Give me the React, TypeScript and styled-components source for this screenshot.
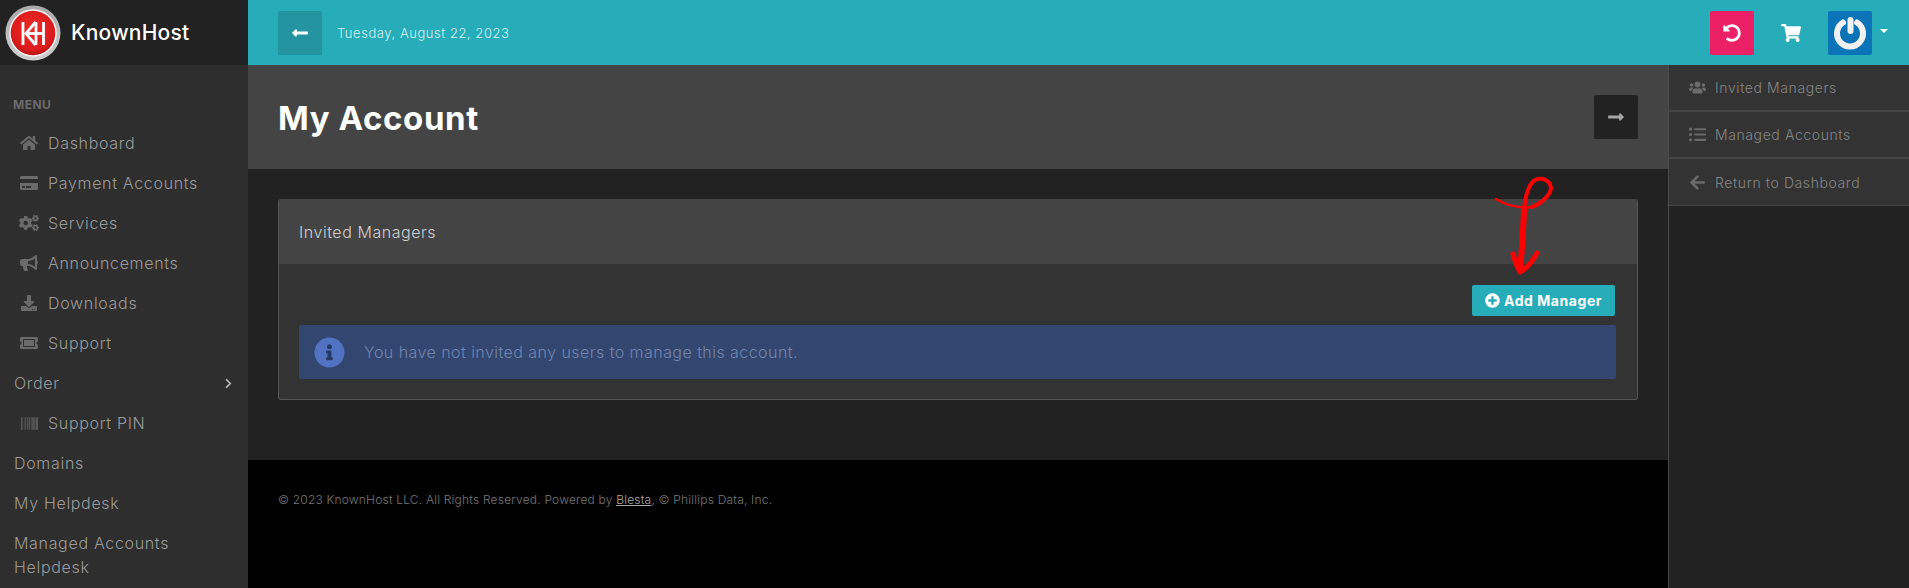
import React from "react";
import styled, { createGlobalStyle } from "styled-components";
import {
  FaHome, FaCreditCard, FaCogs, FaBullhorn, FaDownload, FaTicketAlt, FaChevronRight, FaBarcode,
  FaUsers, FaListUl, FaArrowLeft, FaLongArrowAltLeft, FaLongArrowAltRight, FaUndoAlt, FaShoppingCart,
  FaPlusCircle, FaInfoCircle,
} from "react-icons/fa";

const Global = createGlobalStyle`
  html, body { margin: 0; padding: 0; height: 588px; overflow: hidden; background: #222; }
  * { box-sizing: border-box; }
  body { font-family: Inter, "Open Sans", "Liberation Sans", sans-serif; }
`;

const Page = styled.div`
  display: grid;
  grid-template-columns: 248px 1fr;
  width: 1909px;
  height: 588px;
  overflow: hidden;
  position: relative;
`;
const Side = styled.aside`
  background: #2e2e2e;
  display: flex;
  flex-direction: column;
  min-height: 0;
`;
const Brand = styled.div`
  height: 65px;
  flex: none;
  background: #222;
  display: flex;
  align-items: center;
  padding-left: 5px;
  gap: 8px;
`;
const BrandName = styled.span`
  color: #fff;
  font-size: 21px;
  font-weight: 500;
  letter-spacing: 0.25px;
`;
const MenuTitle = styled.div`
  color: #6a6a6a;
  font-size: 12px;
  font-weight: 700;
  letter-spacing: 0.5px;
  margin: 33px 0 0 13px;
  line-height: 13px;
`;
const Nav = styled.nav`
  display: flex;
  flex-direction: column;
  margin-top: 12px;
`;
const NavRow = styled.div<{ $indent?: boolean }>`
  display: flex;
  align-items: flex-start;
  padding: 8px 14px 8px ${(p) => (p.$indent ? "20px" : "14px")};
  color: #9a9a9a;
  font-size: 16px;
  font-weight: 300;
  line-height: 24px;
  letter-spacing: 0.68px;
`;
const NavIcon = styled.span<{ $size?: number }>`
  width: 18px;
  margin-right: 10px;
  height: 24px;
  flex: none;
  display: flex;
  align-items: center;
  justify-content: center;
  color: #6a6a6a;
  font-size: ${(p) => p.$size ?? 18}px;
  svg { flex: none; }
`;
const NavLabel = styled.span`
  flex: 1;
`;
const Chevron = styled.span`
  display: flex;
  align-items: center;
  height: 24px;
  color: #b5b5b5;
  font-size: 11px;
`;
const Main = styled.div`
  display: flex;
  flex-direction: column;
  min-width: 0;
`;
const TopBar = styled.header`
  height: 65px;
  flex: none;
  background: #27acb9;
  display: flex;
  align-items: center;
  padding: 0 21px 0 30px;
`;
const SquareBtn = styled.div<{ $bg: string; $color?: string }>`
  width: 44px;
  height: 44px;
  border-radius: 2px;
  flex: none;
  background: ${(p) => p.$bg};
  color: ${(p) => p.$color ?? "#fff"};
  display: flex;
  align-items: center;
  justify-content: center;
  font-size: 18px;
`;
const DateText = styled.span`
  margin-left: 15px;
  color: #d3f0f3;
  font-size: 13px;
  font-weight: 300;
  letter-spacing: 0.55px;
  flex: 1;
`;
const Cart = styled.span`
  display: flex;
  color: #fff;
  font-size: 20px;
  margin: 0 27px;
`;
const Caret = styled.span`
  width: 0;
  height: 0;
  margin-left: 8px;
  margin-bottom: 3px;
  border-left: 4px solid transparent;
  border-right: 4px solid transparent;
  border-top: 4px solid #fff;
`;
const Body = styled.div`
  flex: 1;
  min-height: 0;
  display: grid;
  grid-template-columns: 1fr 241px;
`;
const Column = styled.div`
  display: flex;
  flex-direction: column;
  min-width: 0;
`;
const PageHead = styled.div`
  height: 104px;
  flex: none;
  background: #444;
  display: flex;
  align-items: center;
  justify-content: space-between;
  padding: 0 30px;
`;
const Title = styled.h1`
  margin: 2px 0 0;
  color: #fff;
  font-size: 33px;
  font-weight: 700;
  letter-spacing: 0.6px;
  line-height: 40px;
`;
const Content = styled.main`
  height: 291px;
  flex: none;
  background: #222;
  padding: 30px;
`;
const Card = styled.section`
  height: 201px;
  background: #333;
  border: 1px solid #555;
  border-top: 0;
  border-radius: 3px;
  overflow: hidden;
`;
const CardHead = styled.div`
  height: 65px;
  background: #444;
  display: flex;
  align-items: center;
  padding-left: 20px;
  color: #cfcfcf;
  font-size: 16px;
  font-weight: 300;
  letter-spacing: 0.55px;
`;
const CardBody = styled.div`
  padding: 21px 21px 0 20px;
`;
const Actions = styled.div`
  display: flex;
  justify-content: flex-end;
  padding-right: 1px;
  margin-bottom: 9px;
`;
const AddBtn = styled.div`
  height: 31px;
  width: 143px;
  border-radius: 2px;
  background: #27acb9;
  color: #fff;
  font-size: 14px;
  font-weight: 700;
  display: flex;
  align-items: center;
  justify-content: center;
  gap: 4px;
  letter-spacing: 0.55px;
  svg { font-size: 15px; flex: none; }
`;
const Alert = styled.div`
  height: 54px;
  background: #324670;
  border-radius: 2px;
  display: flex;
  align-items: center;
  padding-left: 15px;
  color: #7284ad;
  font-size: 16px;
  font-weight: 300;
  letter-spacing: 0.45px;
`;
const AlertIcon = styled.span`
  display: flex;
  color: #5273c4;
  font-size: 31px;
  margin-right: 19px;
  background: radial-gradient(circle, #253a66 45%, transparent 46%);
  border-radius: 50%;
`;
const Foot = styled.footer`
  flex: 1;
  background: #000;
  padding: 31px 30px;
  color: #777;
  font-size: 12px;
  font-weight: 300;
  line-height: 18px;
  letter-spacing: 0.2px;
`;
const FootLink = styled.span`
  color: #aaa;
  text-decoration: underline;
`;
const RightPanel = styled.aside`
  background: #222;
  border-left: 1px solid #4a4a4a;
  min-height: 0;
`;
const RightItem = styled.div`
  height: 47px;
  background: #333;
  border-bottom: 2px solid #444;
  display: flex;
  align-items: center;
  padding-left: 20px;
  color: #858585;
  font-size: 14px;
  font-weight: 300;
  letter-spacing: 0.6px;
  &:last-child { border-bottom-width: 1px; }
`;
const RightIcon = styled.span`
  display: flex;
  justify-content: center;
  width: 17px;
  margin-right: 9px;
  color: #6a6a6a;
  font-size: 17px;
`;
const Scribble = styled.svg`
  position: absolute;
  left: 1490px;
  top: 175px;
  width: 70px;
  height: 105px;
  pointer-events: none;
`;

const nav = [
  { label: "Dashboard", icon: <FaHome />, indent: true },
  { label: "Payment Accounts", icon: <FaCreditCard />, indent: true },
  { label: "Services", icon: <FaCogs />, indent: true, size: 20 },
  { label: "Announcements", icon: <FaBullhorn />, indent: true },
  { label: "Downloads", icon: <FaDownload />, size: 16, indent: true },
  { label: "Support", icon: <FaTicketAlt />, indent: true },
  { label: "Order", chevron: true },
  { label: "Support PIN", icon: <FaBarcode />, size: 17, indent: true },
  { label: "Domains" },
  { label: "My Helpdesk" },
  { label: "Managed Accounts Helpdesk" },
];

function Logo() {
  return (
    <svg width="58" height="58" viewBox="0 0 58 58">
      <defs>
        <linearGradient id="ring" x1="0" y1="0" x2="0" y2="1">
          <stop offset="0" stopColor="#a9a9a9" />
          <stop offset="1" stopColor="#cfcfcf" />
        </linearGradient>
        <radialGradient id="red" cx="0.5" cy="0.42" r="0.62">
          <stop offset="0" stopColor="#ee2a24" />
          <stop offset="0.75" stopColor="#dc1c1c" />
          <stop offset="1" stopColor="#a90f12" />
        </radialGradient>
      </defs>
      <circle cx="28" cy="29" r="27.5" fill="url(#ring)" />
      <circle cx="28" cy="29" r="23.8" fill="#f4f4f4" />
      <circle cx="28" cy="29" r="22.3" fill="url(#red)" />
      <path
        d="M18 18v23M30.5 18 21 29.5 30.5 41M31 18v23M38.5 18v23M21 29.5h17.5"
        fill="none"
        stroke="#fff"
        strokeWidth="2.8"
      />
    </svg>
  );
}

function Power() {
  return (
    <svg width="38" height="38" viewBox="0 0 38 38">
      <path
        d="M12 8.5a13 13 0 1 0 14 0"
        fill="none"
        stroke="#f1f1f1"
        strokeWidth="6"
        strokeLinecap="round"
      />
      <path d="M19.5 6v11" fill="none" stroke="#f1f1f1" strokeWidth="6" strokeLinecap="round" />
    </svg>
  );
}

export default function App() {
  return (
    <Page>
      <Global />
      <Side>
        <Brand>
          <Logo />
          <BrandName>KnownHost</BrandName>
        </Brand>
        <MenuTitle>MENU</MenuTitle>
        <Nav>
          {nav.map((n) => (
            <NavRow key={n.label} $indent={n.indent}>
              {n.icon && <NavIcon $size={n.size}>{n.icon}</NavIcon>}
              <NavLabel>{n.label}</NavLabel>
              {n.chevron && (
                <Chevron>
                  <FaChevronRight />
                </Chevron>
              )}
            </NavRow>
          ))}
        </Nav>
      </Side>
      <Main>
        <TopBar>
          <SquareBtn $bg="#2494a1">
            <FaLongArrowAltLeft />
          </SquareBtn>
          <DateText>Tuesday, August 22, 2023</DateText>
          <SquareBtn $bg="#ec2064">
            <FaUndoAlt />
          </SquareBtn>
          <Cart>
            <FaShoppingCart />
          </Cart>
          <SquareBtn $bg="#0b73b8">
            <Power />
          </SquareBtn>
          <Caret />
        </TopBar>
        <Body>
          <Column>
            <PageHead>
              <Title>My Account</Title>
              <SquareBtn $bg="#222" $color="#a5a5a5">
                <FaLongArrowAltRight />
              </SquareBtn>
            </PageHead>
            <Content>
              <Card>
                <CardHead>Invited Managers</CardHead>
                <CardBody>
                  <Actions>
                    <AddBtn>
                      <FaPlusCircle />
                      Add Manager
                    </AddBtn>
                  </Actions>
                  <Alert>
                    <AlertIcon>
                      <FaInfoCircle />
                    </AlertIcon>
                    You have not invited any users to manage this account.
                  </Alert>
                </CardBody>
              </Card>
            </Content>
            <Foot>
              © 2023 KnownHost LLC. All Rights Reserved. Powered by <FootLink>Blesta</FootLink>, © Phillips Data, Inc.
            </Foot>
          </Column>
          <RightPanel>
            <RightItem>
              <RightIcon>
                <FaUsers />
              </RightIcon>
              Invited Managers
            </RightItem>
            <RightItem>
              <RightIcon>
                <FaListUl />
              </RightIcon>
              Managed Accounts
            </RightItem>
            <RightItem>
              <RightIcon>
                <FaArrowLeft />
              </RightIcon>
              Return to Dashboard
            </RightItem>
          </RightPanel>
        </Body>
      </Main>
      <Scribble viewBox="0 0 70 105">
        <path d="M6 24C16 30 27 34 42 32" fill="none" stroke="#f00" strokeWidth="2.6" strokeLinecap="round" />
        <path
          d="M42 32C55 27 61 17 61 13C60 5 52 2 45 5C37 10 35 24 34 35"
          fill="none"
          stroke="#f00"
          strokeWidth="4"
          strokeLinecap="round"
        />
        <path d="M34 35C33 60 31 85 30 95" fill="none" stroke="#f00" strokeWidth="6" strokeLinecap="round" />
        <path
          d="M23 79C25 86 27 92 30 97C37 93 43 86 47 78"
          fill="none"
          stroke="#f00"
          strokeWidth="5"
          strokeLinecap="round"
          strokeLinejoin="round"
        />
      </Scribble>
    </Page>
  );
}
